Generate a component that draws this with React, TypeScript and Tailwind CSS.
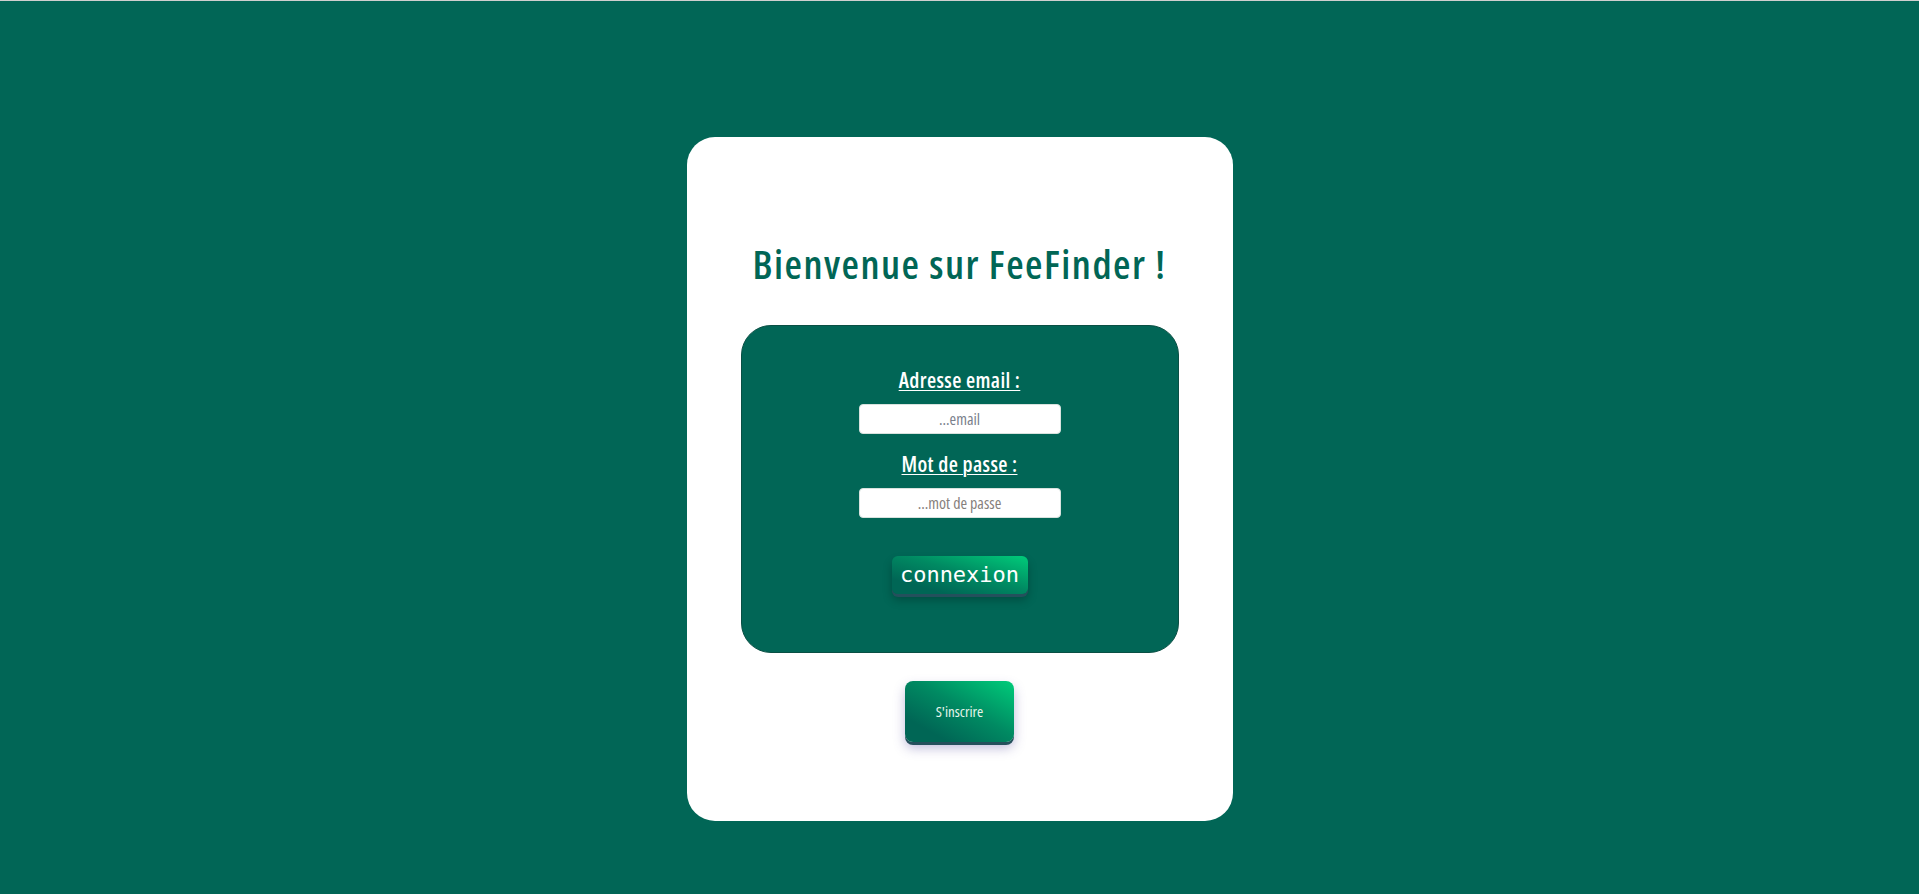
import React from "react";

export default function App() {
  return (
    <div className="min-h-[894px] w-full bg-[#016656] flex flex-col">
      <div className="h-px w-full bg-[#cfcfcf]" />
      <div className="flex justify-center pt-[136px]">
        <div className="w-[546px] h-[684px] bg-white rounded-[28px] flex flex-col items-center pt-[102px] font-['Open_Sans',sans-serif] font-stretch-[75%]">
          <h1 className="text-[40px] leading-[50px] font-semibold text-[#016656] tracking-[1.5px]">
            Bienvenue sur FeeFinder !
          </h1>
          <div className="mt-[36px] w-[438px] h-[328px] bg-[#016656] rounded-[30px] border border-[#0a4f44] flex flex-col items-center pt-[42px]">
            <label className="text-[21px] leading-[24px] font-semibold text-white underline underline-offset-[2px] decoration-1 tracking-[0.4px]">
              Adresse email :
            </label>
            <input
              type="email"
              placeholder="...email"
              className="mt-[12px] w-[202px] h-[30px] bg-white border border-[#d8e2de] rounded-[4px] text-center text-[16px] placeholder:text-[#7a7f8c] outline-none"
            />
            <label className="mt-[18px] text-[21px] leading-[24px] font-semibold text-white underline underline-offset-[2px] decoration-1 tracking-[0.4px]">
              Mot de passe :
            </label>
            <input
              type="password"
              placeholder="...mot de passe"
              className="mt-[12px] w-[202px] h-[30px] bg-white border border-[#d8e2de] rounded-[4px] text-center text-[16px] placeholder:text-[#86807c] outline-none"
            />
            <button className="mt-[38px] w-[136px] h-[38px] rounded-[6px] bg-[linear-gradient(to_bottom_left,#00cc7a_0%,#008a62_45%,#006655_80%)] shadow-[0_3px_0_#24505c,0_6px_10px_rgba(0,0,0,0.25)] text-white text-[22px] leading-[38px] font-['DejaVu_Sans_Mono',monospace] font-stretch-normal">
              connexion
            </button>
          </div>
          <button className="mt-[28px] w-[109px] h-[61px] rounded-[8px] bg-[linear-gradient(to_bottom_left,#00cc7a_0%,#008a62_45%,#006655_80%)] shadow-[0_3px_0_#24505c,0_6px_12px_rgba(70,60,150,0.35)] text-[#e6f5ea] text-[15px] font-medium">
            S'inscrire
          </button>
        </div>
      </div>
    </div>
  );
}
